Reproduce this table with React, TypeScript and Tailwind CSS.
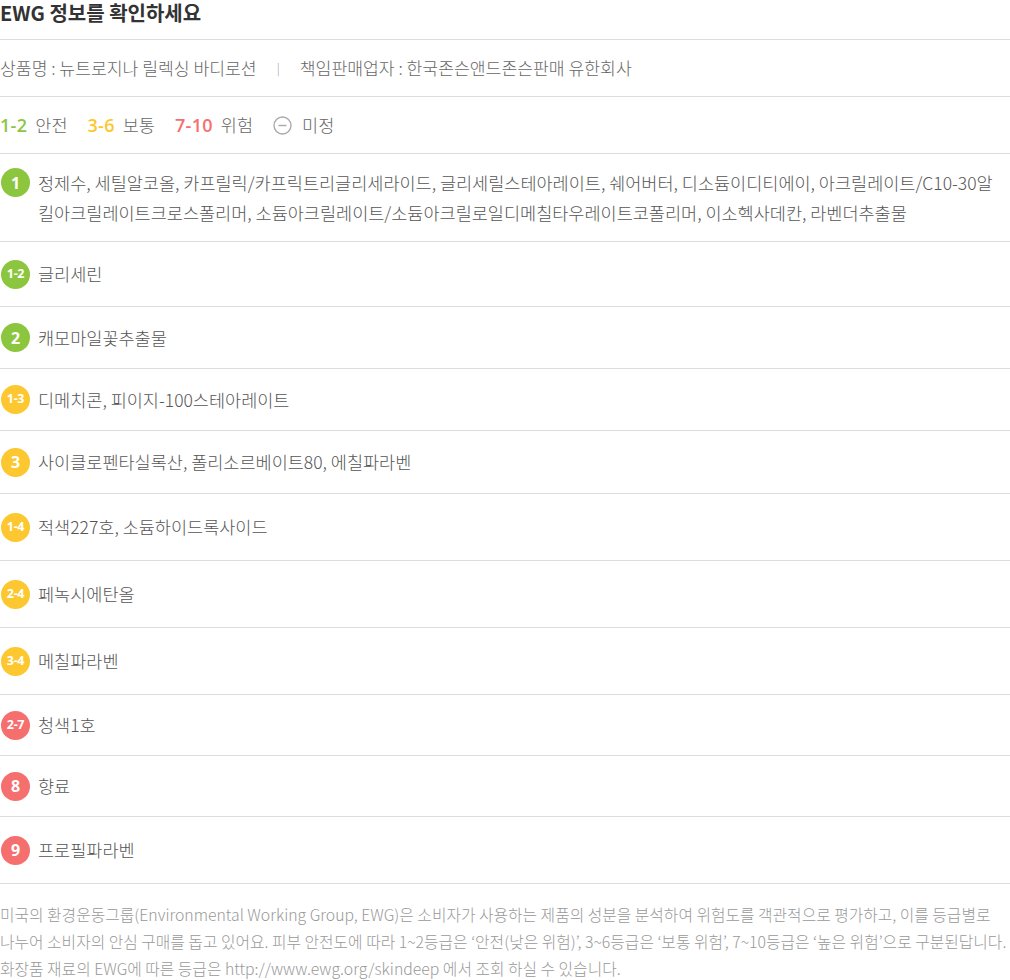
import React from 'react';

type Ingredient = {
  grade: string;
  level: 'safe' | 'mid' | 'risk';
  names: string;
  height: string;
};

const ingredients: Ingredient[] = [
  {
    grade: '1',
    level: 'safe',
    height: 'h-[88px]',
    names:
      '정제수, 세틸알코올, 카프릴릭/카프릭트리글리세라이드, 글리세릴스테아레이트, 쉐어버터, 디소듐이디티에이, 아크릴레이트/C10-30알\n킬아크릴레이트크로스폴리머, 소듐아크릴레이트/소듐아크릴로일디메칠타우레이트코폴리머, 이소헥사데칸, 라벤더추출물',
  },
  { grade: '1-2', level: 'safe', height: 'h-[65px]', names: '글리세린' },
  { grade: '2', level: 'safe', height: 'h-[62px]', names: '캐모마일꽃추출물' },
  { grade: '1-3', level: 'mid', height: 'h-[62px]', names: '디메치콘, 피이지-100스테아레이트' },
  { grade: '3', level: 'mid', height: 'h-[63px]', names: '사이클로펜타실록산, 폴리소르베이트80, 에칠파라벤' },
  { grade: '1-4', level: 'mid', height: 'h-[67px]', names: '적색227호, 소듐하이드록사이드' },
  { grade: '2-4', level: 'mid', height: 'h-[67px]', names: '페녹시에탄올' },
  { grade: '3-4', level: 'mid', height: 'h-[67px]', names: '메칠파라벤' },
  { grade: '2-7', level: 'risk', height: 'h-[61px]', names: '청색1호' },
  { grade: '8', level: 'risk', height: 'h-[61px]', names: '향료' },
  { grade: '9', level: 'risk', height: 'h-[67px]', names: '프로필파라벤' },
];

const badgeColor = {
  safe: 'bg-[#8cc63f]',
  mid: 'bg-[#fdc72f]',
  risk: 'bg-[#f66f6f]',
};

const latin = { fontFamily: '"Open Sans", "Noto Sans", sans-serif' };

const Badge: React.FC<{ grade: string; level: Ingredient['level'] }> = ({ grade, level }) => (
  <span
    className={`flex h-[29px] w-[29px] shrink-0 items-center justify-center rounded-full font-bold text-white ${badgeColor[level]} ${
      grade.length > 1 ? 'text-[12.5px] tracking-[-0.3px]' : 'text-[16px]'
    }`}
    style={latin}
  >
    {grade}
  </span>
);

const App: React.FC = () => {
  return (
    <div
      className="w-[1010px] bg-white text-[#666]"
      style={{ fontFamily: '"Noto Sans CJK KR", "Noto Sans", sans-serif' }}
    >
      <h2 className="flex h-[40px] items-start border-b border-[#dcdcdc] pt-[1px] text-[20px] font-bold leading-[24px] text-[#333]">
        EWG 정보를 확인하세요
      </h2>

      <div className="flex h-[57px] items-center border-b border-[#dcdcdc] text-[17.2px] font-light">
        <span>상품명 : 뉴트로지나 릴렉싱 바디로션</span>
        <span className="mx-[20px] text-[12px] text-[#999]">|</span>
        <span>책임판매업자 : 한국존슨앤드존슨판매 유한회사</span>
      </div>

      <div className="flex h-[57px] items-center gap-[20px] border-b border-[#dcdcdc] text-[17.5px] font-light">
        <span className="flex items-center gap-[8px]">
          <b className="text-[18px] font-semibold tracking-[0.3px] text-[#8cc63f]" style={latin}>1-2</b>
          안전
        </span>
        <span className="flex items-center gap-[8px]">
          <b className="text-[18px] font-semibold tracking-[0.3px] text-[#fdc72f]" style={latin}>3-6</b>
          보통
        </span>
        <span className="flex items-center gap-[8px]">
          <b className="text-[18px] font-semibold tracking-[0.3px] text-[#f66f6f]" style={latin}>7-10</b>
          위험
        </span>
        <span className="flex items-center gap-[10px]">
          <svg width="19" height="19" viewBox="0 0 19 19" fill="none" stroke="#aaa" strokeWidth="1.4">
            <circle cx="9.5" cy="9.5" r="8.5" />
            <line x1="5.5" y1="9.5" x2="13.5" y2="9.5" />
          </svg>
          미정
        </span>
      </div>

      <ul>
        {ingredients.map((item) => (
          <li
            key={item.grade}
            className={`flex gap-[8px] border-b border-[#dcdcdc] pl-[1px] ${item.height} ${
              item.grade === '1' ? 'items-start pt-[14px]' : 'items-center'
            }`}
          >
            <Badge grade={item.grade} level={item.level} />
            <p className="whitespace-pre-line text-[17.5px] font-light leading-[30px] text-[#555]">{item.names}</p>
          </li>
        ))}
      </ul>

      <p className="pt-[17px] text-[15.8px] font-light leading-[27px] text-[#999]">
        <span className="block whitespace-nowrap">
          미국의 환경운동그룹(Environmental Working Group, EWG)은 소비자가 사용하는 제품의 성분을 분석하여 위험도를 객관적으로 평가하고, 이를 등급별로
        </span>
        <span className="block whitespace-nowrap">
          나누어 소비자의 안심 구매를 돕고 있어요. 피부 안전도에 따라 1~2등급은 ‘안전(낮은 위험)’, 3~6등급은 ‘보통 위험’, 7~10등급은 ‘높은 위험’으로 구분된답니다.
        </span>
        <span className="block whitespace-nowrap">
          화장품 재료의 EWG에 따른 등급은 http://www.ewg.org/skindeep 에서 조회 하실 수 있습니다.
        </span>
      </p>
    </div>
  );
};

export default App;
